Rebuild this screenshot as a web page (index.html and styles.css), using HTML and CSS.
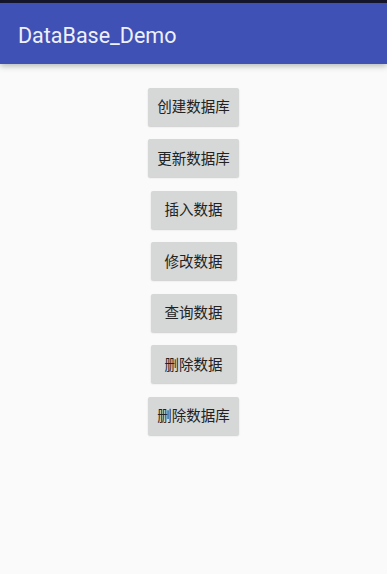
FILE: index.html
```html
<!DOCTYPE html>
<html lang="zh">
<head>
<meta charset="utf-8">
<title>DataBase_Demo</title>
<link rel="stylesheet" href="styles.css">
</head>
<body>
  <div class="status"></div>
  <header class="toolbar">
    <h1 class="title">DataBase_Demo</h1>
  </header>
  <main class="buttons">
    <button class="btn">创建数据库</button>
    <button class="btn">更新数据库</button>
    <button class="btn">插入数据</button>
    <button class="btn">修改数据</button>
    <button class="btn">查询数据</button>
    <button class="btn">删除数据</button>
    <button class="btn">删除数据库</button>
  </main>
</body>
</html>
```

FILE: styles.css
```css
html, body {
  margin: 0;
  padding: 0;
}
body {
  width: 387px;
  height: 574px;
  background: #fafafa;
  overflow: hidden;
  font-family: Roboto, "Noto Sans CJK SC", sans-serif;
}
.status {
  height: 3px;
  background: #14142a;
}
.toolbar {
  position: relative;
  height: 61px;
  background: #3f51b5;
  display: flex;
  align-items: center;
  padding-left: 18px;
  box-shadow: 0 2px 6px rgba(40, 60, 55, 0.35);
}
.title {
  margin: 0;
  margin-top: 3px;
  font-family: Roboto, sans-serif;
  font-weight: 400;
  font-size: 21.5px;
  color: #eef0fa;
  letter-spacing: 0;
}
.buttons {
  display: flex;
  flex-direction: column;
  align-items: center;
  gap: 13.5px;
  padding-top: 23.5px;
}
.btn {
  height: 38px;
  min-width: 86px;
  padding: 0 9.5px;
  border: none;
  border-radius: 2px;
  background: #d6d7d7;
  box-shadow: 0 1px 1.5px rgba(0, 0, 0, 0.18);
  font-family: "Noto Sans CJK SC", sans-serif;
  font-size: 14.5px;
  color: #222;
  line-height: 1;
}
```
